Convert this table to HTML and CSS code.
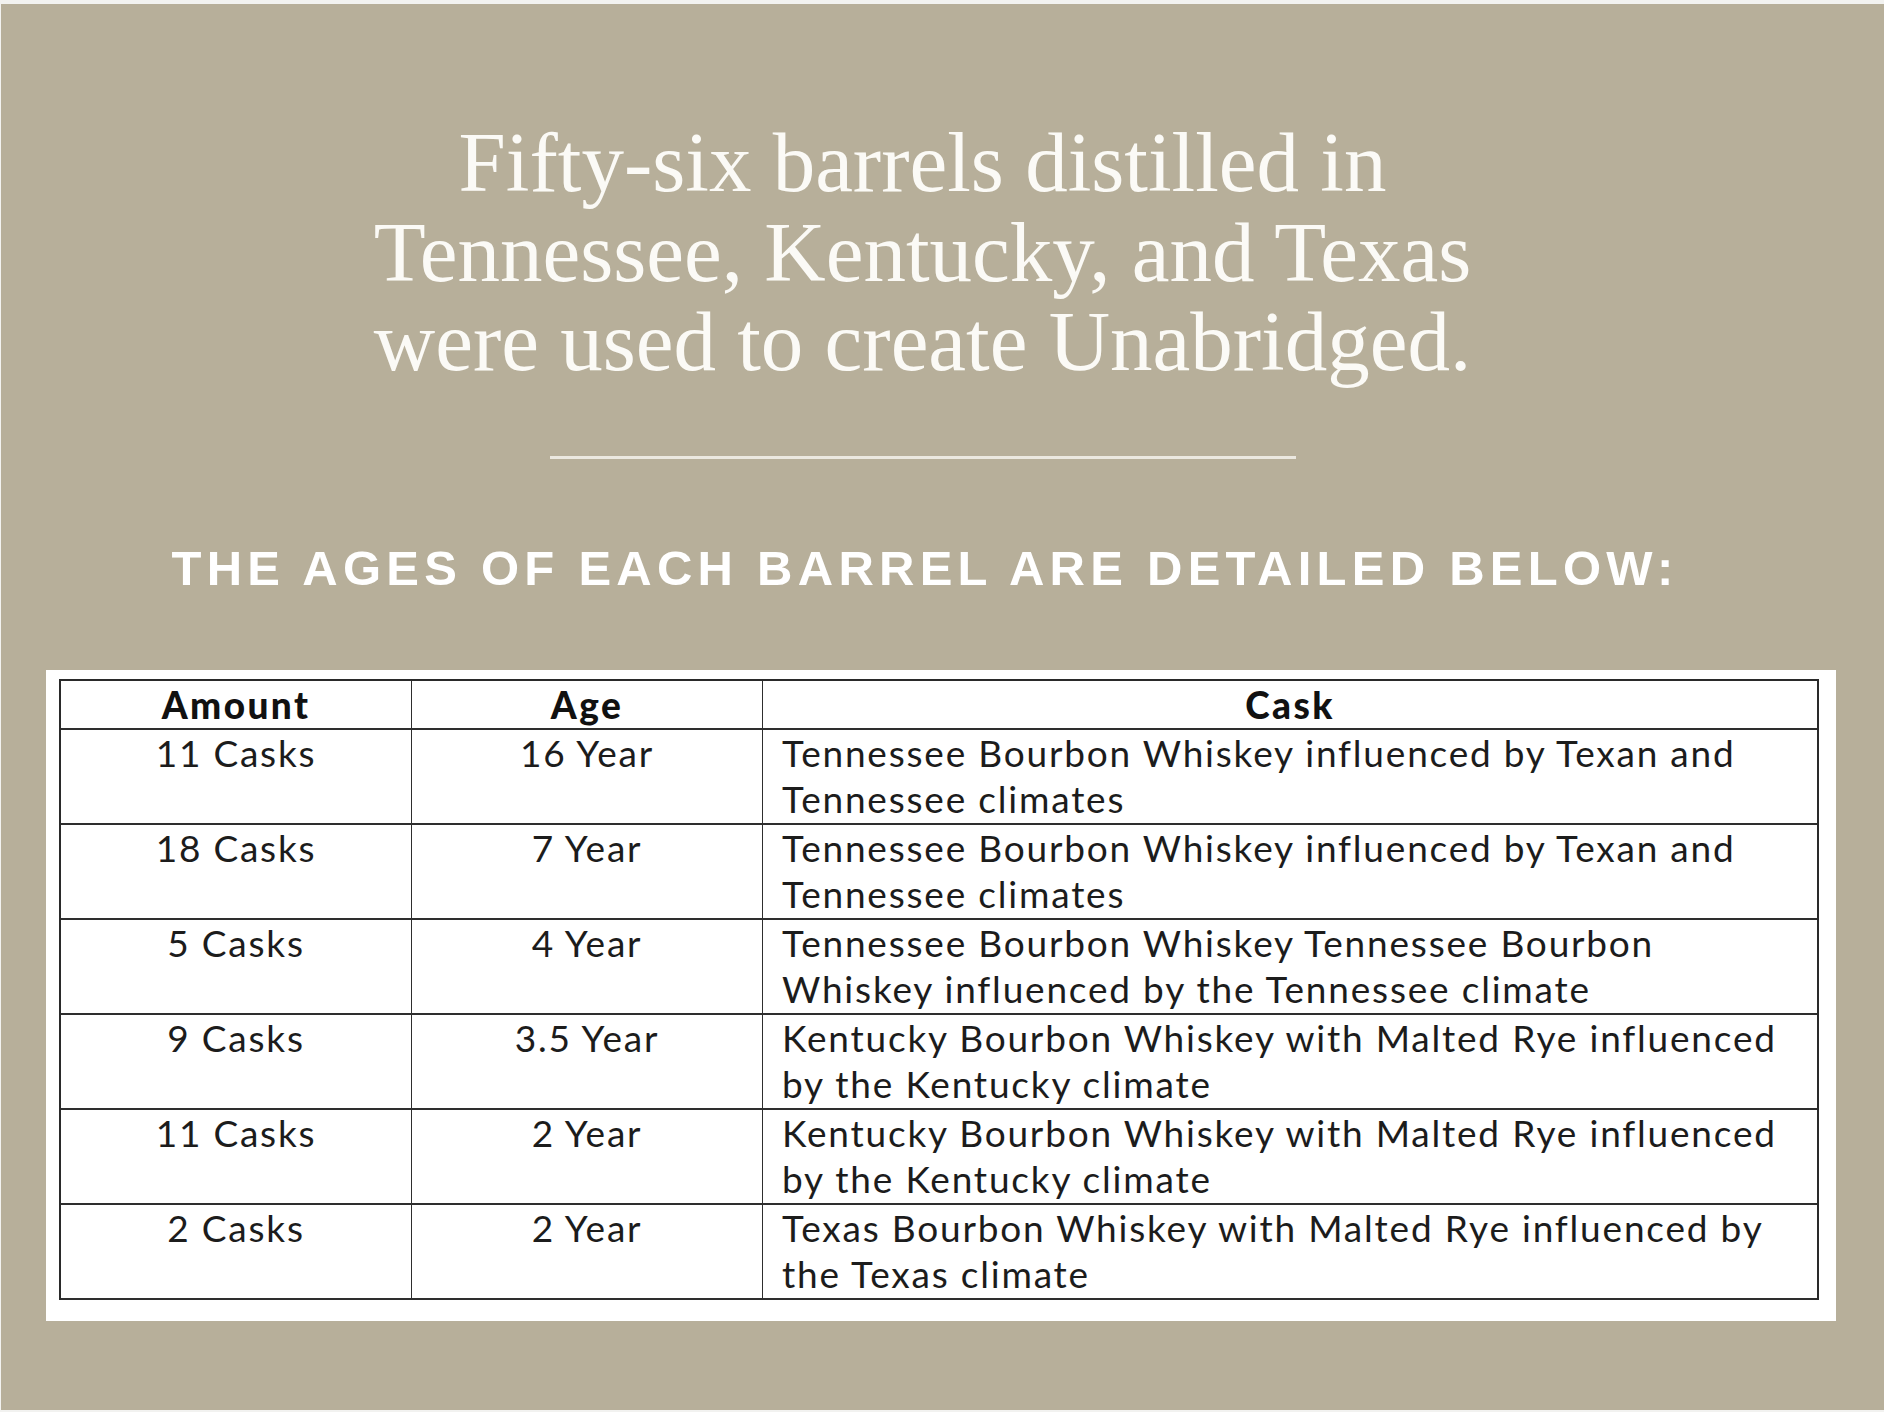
FILE: index.html
```html
<!DOCTYPE html>
<html lang="en">
<head>
<meta charset="utf-8">
<title>Unabridged – Barrel Ages</title>
<link rel="stylesheet" href="styles.css">
</head>
<body>
<main class="page">
  <section class="intro">
    <h1 class="headline">Fifty-six barrels distilled in<br>Tennessee, Kentucky, and Texas<br>were used to create Unabridged.</h1>
    <hr class="divider">
    <h2 class="subtitle">THE AGES OF EACH BARREL ARE DETAILED BELOW:</h2>
  </section>
  <section class="panel">
    <table class="ages">
      <colgroup>
        <col class="c-amount">
        <col class="c-age">
        <col class="c-cask">
      </colgroup>
      <thead>
        <tr><th>Amount</th><th>Age</th><th>Cask</th></tr>
      </thead>
      <tbody>
        <tr><td class="center">11 Casks</td><td class="center">16 Year</td><td class="cask">Tennessee Bourbon Whiskey influenced by Texan and<br>Tennessee climates</td></tr>
        <tr><td class="center">18 Casks</td><td class="center">7 Year</td><td class="cask">Tennessee Bourbon Whiskey influenced by Texan and<br>Tennessee climates</td></tr>
        <tr><td class="center">5 Casks</td><td class="center">4 Year</td><td class="cask">Tennessee Bourbon Whiskey Tennessee Bourbon<br>Whiskey influenced by the Tennessee climate</td></tr>
        <tr><td class="center">9 Casks</td><td class="center">3.5 Year</td><td class="cask">Kentucky Bourbon Whiskey with Malted Rye influenced<br>by the Kentucky climate</td></tr>
        <tr><td class="center">11 Casks</td><td class="center">2 Year</td><td class="cask">Kentucky Bourbon Whiskey with Malted Rye influenced<br>by the Kentucky climate</td></tr>
        <tr><td class="center">2 Casks</td><td class="center">2 Year</td><td class="cask">Texas Bourbon Whiskey with Malted Rye influenced by<br>the Texas climate</td></tr>
      </tbody>
    </table>
  </section>
</main>
</body>
</html>
```

FILE: styles.css
```css
html, body {
  margin: 0;
  padding: 0;
  background: #f2f2f0;
}

.page {
  box-sizing: border-box;
  margin: 4px 0 0 1px;
  height: 1406px;
  background: #b7af9a;
  display: flex;
  flex-direction: column;
  padding-top: 114px;
}

.intro {
  display: flex;
  flex-direction: column;
  align-items: center;
  padding-right: 40px;
}

.headline {
  margin: 0;
  font-family: "Liberation Serif", "Times New Roman", serif;
  font-weight: normal;
  font-size: 85px;
  line-height: 89.5px;
  color: #fbfaf6;
  text-align: center;
}

.divider {
  margin: 69px 0 0 0;
  width: 746px;
  height: 3px;
  border: 0;
  background: #ebe8e0;
}

.subtitle {
  margin: 85px 0 0 5px;
  font-family: "Liberation Sans", Arial, sans-serif;
  font-weight: bold;
  font-size: 49px;
  line-height: 49px;
  letter-spacing: 5.25px;
  color: #ffffff;
  text-align: center;
}

.panel {
  box-sizing: border-box;
  margin: 77px 0 0 45px;
  width: 1790px;
  background: #ffffff;
  padding: 9px 17px 21px 13px;
}

.ages {
  table-layout: fixed;
  width: 1760px;
  border-collapse: separate;
  border-spacing: 0;
  border-top: 2px solid #2a2a2a;
  border-left: 2px solid #2a2a2a;
  border-right: 2px solid #2a2a2a;
  font-family: Lato, "Open Sans", sans-serif;
  font-size: 37px;
  letter-spacing: 1.8px;
  color: #1c1c1c;
}

.c-amount { width: 351px; }
.c-age { width: 351px; }
.c-cask { width: auto; }

.ages th,
.ages td {
  padding: 0;
  border-bottom: 2px solid #2e2e2e;
  border-right: 1px solid #2e2e2e;
  vertical-align: top;
}

.ages th:last-child,
.ages td:last-child {
  border-right: 0;
}

.ages th {
  height: 47px;
  line-height: 47px;
  font-weight: 900;
  letter-spacing: 2.4px;
  text-align: center;
  color: #111;
}

.ages td {
  height: 93px;
  line-height: 46.5px;
}

.ages td.center {
  text-align: center;
}

.ages td.cask {
  padding-left: 19px;
  text-align: left;
}
```
